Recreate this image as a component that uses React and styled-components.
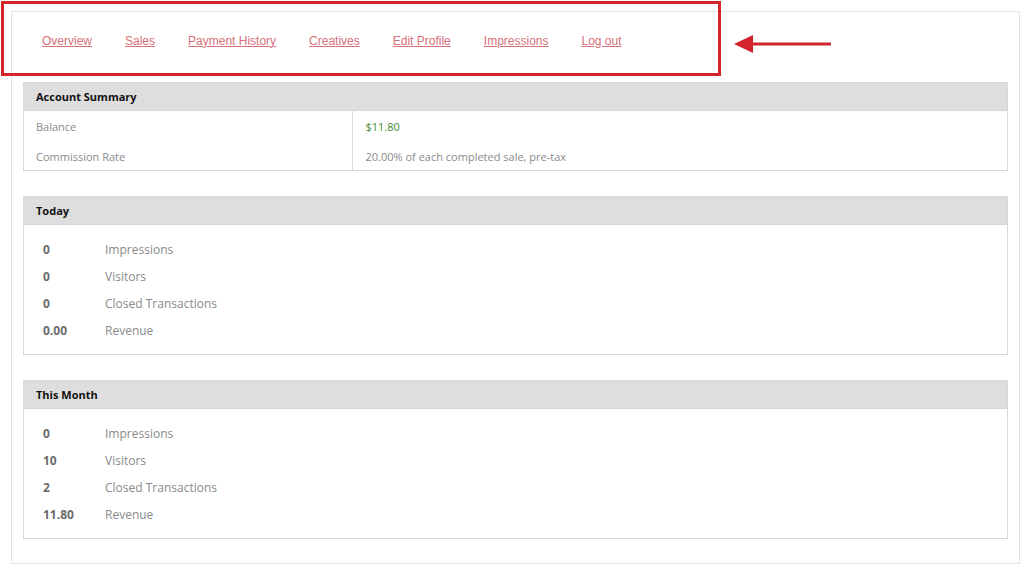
import React from 'react';
import styled, { createGlobalStyle } from 'styled-components';

const GlobalStyle = createGlobalStyle`
  html, body {
    margin: 0;
    padding: 0;
    background: #ffffff;
  }
  body {
    font-family: "Open Sans", "Noto Sans", sans-serif;
  }
`;

const links = ['Overview', 'Sales', 'Payment History', 'Creatives', 'Edit Profile', 'Impressions', 'Log out'];

const today = [
  { value: '0', label: 'Impressions' },
  { value: '0', label: 'Visitors' },
  { value: '0', label: 'Closed Transactions' },
  { value: '0.00', label: 'Revenue' },
];

const thisMonth = [
  { value: '0', label: 'Impressions' },
  { value: '10', label: 'Visitors' },
  { value: '2', label: 'Closed Transactions' },
  { value: '11.80', label: 'Revenue' },
];

const App = () => {
  return (
    <>
      <GlobalStyle />
      <Page>
        <Container>
          <Nav>
            {links.map((l) => (
              <NavLink key={l} href="#">{l}</NavLink>
            ))}
          </Nav>

          <Panel>
            <PanelHeader>Account Summary</PanelHeader>
            <SummaryTable>
              <colgroup>
                <col style={{ width: 328 }} />
                <col />
              </colgroup>
              <tbody>
                <tr>
                  <LabelCell tall>Balance</LabelCell>
                  <ValueCell green>$11.80</ValueCell>
                </tr>
                <tr>
                  <LabelCell>Commission Rate</LabelCell>
                  <ValueCell>20.00% of each completed sale, pre-tax</ValueCell>
                </tr>
              </tbody>
            </SummaryTable>
          </Panel>

          <StatsPanel title="Today" rows={today} />
          <StatsPanel title="This Month" rows={thisMonth} />
        </Container>

        <Highlight />
        <Arrow width="100" height="24" viewBox="0 0 100 24">
          <polygon points="0,12 19,3 19,21" fill="#d3232b" />
          <rect x="17" y="10.5" width="80" height="3" fill="#d3232b" />
        </Arrow>
      </Page>
    </>
  );
};

const StatsPanel = ({ title, rows }) => (
  <Panel>
    <PanelHeader>{title}</PanelHeader>
    <StatsBody>
      {rows.map((r) => (
        <StatRow key={r.label}>
          <StatValue>{r.value}</StatValue>
          <StatLabel>{r.label}</StatLabel>
        </StatRow>
      ))}
    </StatsBody>
  </Panel>
);

const Page = styled.div`
  position: relative;
  width: 1024px;
  height: 571px;
  padding: 11px 4px 0 11px;
  box-sizing: border-box;
`;

const Container = styled.div`
  border: 1px solid #e4e4e4;
  padding: 0 11px 24px;
  display: flex;
  flex-direction: column;
  gap: 25px;
`;

const Nav = styled.nav`
  display: flex;
  align-items: center;
  gap: 33px;
  height: 57px;
  padding-left: 19px;
  margin-bottom: -12px;
`;

const NavLink = styled.a`
  font-family: "Liberation Sans", Arial, sans-serif;
  font-size: 12px;
  color: #d6707a;
  text-decoration: underline;
`;

const Panel = styled.section`
  border: 1px solid #d8d8d8;
  background: #ffffff;
`;

const PanelHeader = styled.div`
  background: #dedede;
  height: 27px;
  line-height: 28px;
  padding-left: 12px;
  font-size: 11px;
  font-weight: 700;
  color: #111111;
  border-bottom: 1px solid #d6d6d6;
`;

const SummaryTable = styled.table`
  width: 100%;
  table-layout: fixed;
  border-collapse: collapse;
  font-size: 11px;
`;

const LabelCell = styled.td`
  padding: 0 12px;
  height: ${({ tall }) => (tall ? '31px' : '28px')};
  color: #8a8a8a;
  border-right: 1px solid #dcdcdc;
`;

const ValueCell = styled.td`
  padding: 0 13px;
  color: ${({ green }) => (green ? '#3f8a32' : '#8a8a8a')};
`;

const StatsBody = styled.div`
  padding: 11px 0 10px 19px;
`;

const StatRow = styled.div`
  display: flex;
  align-items: center;
  height: 27px;
`;

const StatValue = styled.span`
  width: 62px;
  font-size: 12px;
  font-weight: 700;
  color: #6b6b6b;
`;

const StatLabel = styled.span`
  font-size: 12px;
  color: #8a8a8a;
`;

const Highlight = styled.div`
  position: absolute;
  left: 1px;
  top: 1px;
  width: 714px;
  height: 69px;
  border: 3px solid #d3262b;
  pointer-events: none;
`;

const Arrow = styled.svg`
  position: absolute;
  left: 734px;
  top: 32px;
`;

export default App;
